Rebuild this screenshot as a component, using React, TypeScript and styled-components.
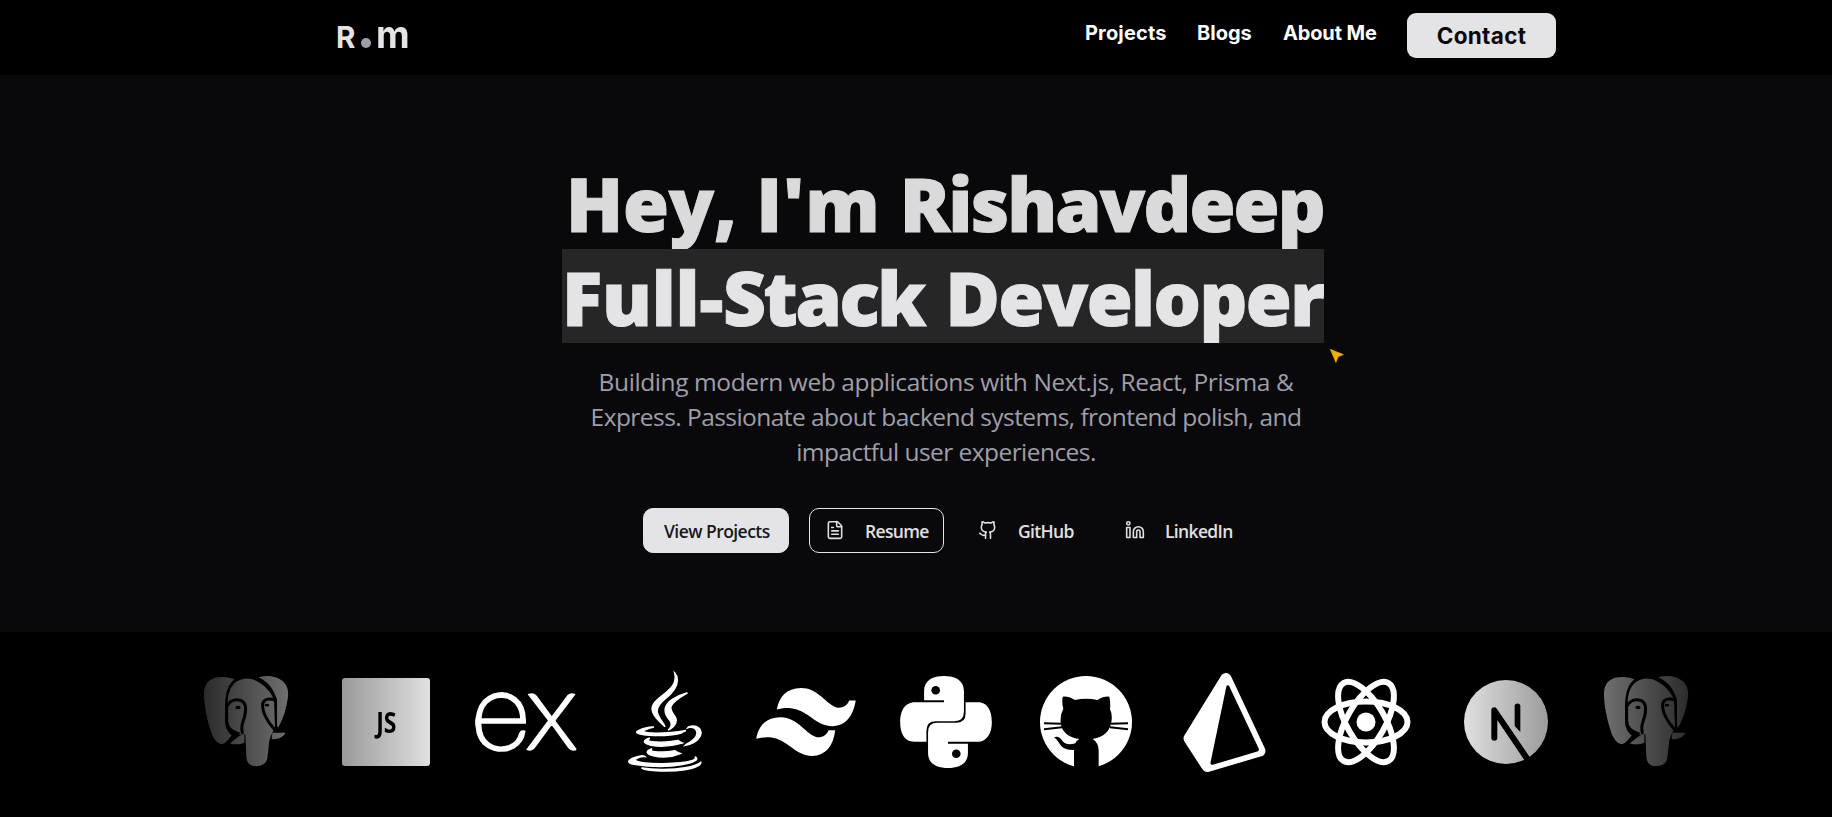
import React from 'react';
import styled, { createGlobalStyle } from 'styled-components';
import { FileText, Github, Linkedin } from 'lucide-react';
import { FaJava } from 'react-icons/fa';
import { SiExpress, SiPrisma } from 'react-icons/si';

const GlobalStyle = createGlobalStyle`
  *, *::before, *::after { box-sizing: border-box; }
  body { margin: 0; background: #000; overflow: hidden; }
`;

const Page = styled.div`
  position: relative;
  width: 1832px;
  height: 817px;
  overflow: hidden;
  background: #000;
  font-family: 'Open Sans', 'Noto Sans', sans-serif;
`;

const Header = styled.header`
  height: 75px;
  padding-left: 338px;
  background: #000;
  font-family: Inter, sans-serif;
`;

const HeaderInner = styled.div`
  width: 1218px;
  height: 75px;
  display: flex;
  justify-content: space-between;
  align-items: flex-start;
`;

const Logo = styled.a`
  display: flex;
  align-items: baseline;
  height: 75px;
  padding-top: 10px;
  color: #e4e4e7;
  font-weight: 700;
  line-height: 48px;
`;

const LogoR = styled.span`
  width: 23px;
  margin-left: -2px;
  font-size: 29.5px;
`;

const LogoDot = styled.span`
  width: 10px;
  height: 10px;
  margin: 0 5px 0 2px;
  border-radius: 50%;
  background: #9f9fa9;
`;

const LogoM = styled.span`
  font-size: 38px;
  transform: scaleX(0.97);
  transform-origin: left;
`;

const Nav = styled.nav`
  display: flex;
  align-items: flex-start;
  padding-top: 13px;
`;

const NavLink = styled.a<{ $width: number; $spacing?: number }>`
  width: ${(p) => p.$width}px;
  color: #fff;
  font-size: 20px;
  font-weight: 700;
  line-height: 40px;
  letter-spacing: ${(p) => p.$spacing ?? 0}px;
  white-space: nowrap;
`;

const ContactButton = styled.button`
  width: 149px;
  height: 45px;
  padding: 0;
  border: 0;
  border-radius: 9px;
  background: #e4e4e7;
  color: #09090b;
  font-family: inherit;
  font-size: 22.5px;
  font-weight: 650;
  letter-spacing: 0.3px;
  line-height: 45px;
`;

const Hero = styled.main`
  display: flex;
  flex-direction: column;
  align-items: center;
  height: 557px;
  padding: 80px 0 0 61px;
  background: #09090b;
`;

const Title = styled.h1`
  display: flex;
  flex-direction: column;
  width: 769px;
  margin: 0 0 21px;
  padding-right: 7px;
  font-size: 74.5px;
  font-weight: 800;
  line-height: 94px;
`;

const TitleLine = styled.span<{ $indent: number; $highlight?: boolean }>`
  height: 94px;
  padding: 1px 0 0 ${(p) => p.$indent}px;
  overflow: hidden;
  white-space: nowrap;
  color: ${(p) => (p.$highlight ? '#e4e4e7' : '#dadada')};
  background: ${(p) => (p.$highlight ? '#262626' : 'transparent')};
  -webkit-text-stroke: 1px currentColor;
`;

const Word = styled.span<{ $spacing: number; $gap?: number }>`
  margin-right: ${(p) => p.$gap ?? 0}px;
  letter-spacing: ${(p) => p.$spacing}px;
`;

const Intro = styled.p`
  display: flex;
  flex-direction: column;
  align-items: center;
  margin: 0 0 39px;
  color: #9f9fa9;
  font-size: 24.5px;
  line-height: 35px;
`;

const IntroLine = styled.span<{ $spacing: number }>`
  margin-left: -1px;
  letter-spacing: ${(p) => p.$spacing}px;
  white-space: nowrap;
`;

const Actions = styled.div`
  display: flex;
  width: 607px;
`;

const ActionButton = styled.a<{ $width: number; $gap?: number; $variant?: 'solid' | 'outline' }>`
  flex: none;
  display: flex;
  align-items: center;
  width: ${(p) => p.$width}px;
  height: 45px;
  margin-right: ${(p) => p.$gap ?? 0}px;
  padding-left: ${(p) => (p.$variant === 'solid' ? 20 : 16)}px;
  border: 1px solid ${(p) => (p.$variant ? '#e4e4e7' : 'transparent')};
  border-radius: 10px;
  background: ${(p) => (p.$variant === 'solid' ? '#e4e4e7' : 'transparent')};
  color: ${(p) => (p.$variant === 'solid' ? '#18181b' : '#e0e0e3')};
  font-size: 17.5px;
  font-weight: ${(p) => (p.$variant === 'solid' ? 550 : 600)};
  letter-spacing: ${(p) => (p.$variant === 'solid' ? -0.55 : -0.65)}px;
  line-height: 24px;
  white-space: nowrap;

  svg {
    flex: none;
    margin: -2px 20px 0 -1px;
  }
`;

const ActionLabel = styled.span`
  padding-top: 1px;
`;

const Pointer = styled.svg`
  position: absolute;
  left: 1330px;
  top: 349px;
  width: 14px;
  height: 14px;
`;

const TechStrip = styled.section`
  display: flex;
  gap: 40px;
  width: 1593px;
  height: 180px;
  margin-left: 150px;
  padding: 40px 0 0 46px;
  overflow: hidden;
  mask-image: linear-gradient(to right, transparent, #000 20%, #000 80%, transparent);
`;

const TechSlot = styled.div<{ $shift?: number }>`
  flex: none;
  display: flex;
  align-items: center;
  justify-content: center;
  width: 100px;
  height: 100px;
  color: #fff;
  filter: blur(0.5px);

  svg {
    flex: none;
    overflow: visible;
    margin-left: ${(p) => p.$shift ?? 0}px;
  }
`;

const JsTile = styled.div`
  display: flex;
  align-items: center;
  justify-content: center;
  width: 88px;
  height: 88px;
  border-radius: 3px;
  background: #fff;
  color: #000;
  font-size: 28px;
  font-weight: 700;
  line-height: 28px;
`;

const JsLabel = styled.span`
  margin-top: -1px;
  transform: scaleX(0.82);
`;

const PostgresIcon = () => (
  <svg width="100" height="116" viewBox="3 0 300 345" fill="#fff">
    <path d="M118 44C98 36 78 36 60 40C34 48 26 68 27 95C29 135 38 170 49 205C58 228 68 238 80 239C92 238 102 222 110 213C94 200 90 185 90 165V120C92 85 98 60 118 44Z" />
    <path d="M190 38C225 30 250 38 265 52C283 70 281 92 276 115C270 148 260 172 248 192C244 180 247 130 246 105C235 72 220 52 190 38Z" />
    <path
      d="M98 118C98 88 106 64 125 51C145 39 165 39 183 49C212 64 228 84 237 106L240 190C228 210 222 225 221 245L217 282C213 298 200 305 183 305C164 305 155 294 154 276L151 209C128 214 99 205 98 170Z"
      stroke="#000"
      strokeWidth="9"
      paintOrder="stroke"
    />
    <path d="M104 236C120 226 130 212 148 209L148 234C136 241 118 241 104 236Z" />
    <path d="M232 205H272C264 218 250 226 230 224Z" />
    <g fill="none" stroke="#000" strokeWidth="9" strokeLinecap="round">
      <path d="M96 124C106 108 122 104 135 107C152 112 154 130 150 150C146 172 136 180 142 204" />
      <path d="M240 107C222 100 206 104 203 118C201 142 217 172 237 193L244 190" />
      <path d="M95 120V170C96 188 106 200 128 207L108 226" />
    </g>
    <ellipse cx="129" cy="129" rx="8" ry="5" fill="#000" />
    <ellipse cx="216" cy="122" rx="7" ry="4" fill="#000" />
  </svg>
);

const TailwindIcon = () => (
  <svg width="100" height="68" viewBox="0 0 300 205" fill="#fff">
    <path d="M62 65C70 25 90 2 135 0C185 0 205 43 240 58C258 64 276 52 280 38H300C292 85 270 115 230 115C180 113 165 78 120 64C95 58 80 60 62 65Z" />
    <path d="M0 153C8 110 32 88 75 88C125 90 145 133 178 147C196 153 213 141 218 127H238C232 175 210 203 168 205C120 202 100 165 60 152C38 146 20 148 0 153Z" />
  </svg>
);

const snake =
  'M72 45C72 12 100 0 132 0S192 12 192 45V108Q192 136 164 136H108Q79 136 79 164V198H42C10 198 0 168 0 138S12 79 45 79H132V73H72Z';

const PythonIcon = () => (
  <svg width="92" height="92" viewBox="0 0 276 277" fill="#fff">
    <path d={snake} />
    <path d={snake} transform="rotate(180 138 138.500)" />
    <circle cx="107" cy="43" r="13" fill="#000" />
    <circle cx="169" cy="234" r="13" fill="#000" />
  </svg>
);

const GithubIcon = () => (
  <svg width="92" height="92" viewBox="0 0 276 276">
    <circle cx="138" cy="138" r="138" fill="#fff" />
    <path d="M68 62Q85 60 105 72Q138 64 172 72Q192 60 208 62Q212 80 210 100Q218 115 214 138Q208 180 158 189Q176 200 176 225V277H102V222Q68 224 58 202Q50 188 42 184Q58 178 68 196Q80 210 106 202Q108 194 118 189Q66 180 62 140Q60 115 70 98Q65 80 68 62Z" />
    <path d="M12 142L64 143M12 160L66 154M264 142L212 143M264 160L210 154" stroke="#000" strokeWidth="6" />
  </svg>
);

const ReactIcon = () => (
  <svg width="90" height="90" viewBox="-45 -45 90 90" fill="none" stroke="#fff" strokeWidth="6">
    <ellipse rx="41.500" ry="20.500" />
    <ellipse rx="45" ry="19" transform="rotate(60)" />
    <ellipse rx="45" ry="19" transform="rotate(-60)" />
    <circle r="9.500" fill="#fff" stroke="none" />
  </svg>
);

const NextIcon = () => (
  <svg width="84" height="84" viewBox="0 0 252 252">
    <circle cx="126" cy="126" r="126" fill="#fff" />
    <path d="M91 173V91L188 234" fill="none" stroke="#000" strokeWidth="18" strokeLinecap="round" strokeLinejoin="round" />
    <path d="M152 79a8.500 8.500 0 0 1 17 0V156L152 138Z" />
  </svg>
);

const JsIcon = () => (
  <JsTile>
    <JsLabel>JS</JsLabel>
  </JsTile>
);

const techIcons: { name: string; icon: React.ReactNode; shift?: number }[] = [
  { name: 'postgres', icon: <PostgresIcon /> },
  { name: 'javascript', icon: <JsIcon /> },
  { name: 'express', icon: <SiExpress size={100} stroke="#fff" strokeWidth={0.4} /> },
  { name: 'java', icon: <FaJava size={98} stroke="#fff" strokeWidth={8} />, shift: -3 },
  { name: 'tailwind', icon: <TailwindIcon /> },
  { name: 'python', icon: <PythonIcon /> },
  { name: 'github', icon: <GithubIcon /> },
  { name: 'prisma', icon: <SiPrisma size={99} />, shift: -4 },
  { name: 'react', icon: <ReactIcon /> },
  { name: 'next', icon: <NextIcon /> },
  { name: 'postgres-repeat', icon: <PostgresIcon /> },
];

export default function App() {
  return (
    <Page>
      <GlobalStyle />
      <Header>
        <HeaderInner>
          <Logo>
            <LogoR>R</LogoR>
            <LogoDot />
            <LogoM>m</LogoM>
          </Logo>
          <Nav>
            <NavLink $width={112} $spacing={0.15}>Projects</NavLink>
            <NavLink $width={86}>Blogs</NavLink>
            <NavLink $width={124} $spacing={-0.15}>About Me</NavLink>
            <ContactButton>Contact</ContactButton>
          </Nav>
        </HeaderInner>
      </Header>
      <Hero>
        <Title>
          <TitleLine $indent={4}>
            <Word $spacing={-0.2}>Hey,</Word> <Word $spacing={0.7}>I'm</Word>{' '}
            <Word $spacing={-1.9}>Rishavdeep</Word>
          </TitleLine>
          <TitleLine $indent={0} $highlight>
            <Word $spacing={-0.2}>Full-</Word>
            <Word $spacing={-2.4} $gap={2}>Stack</Word> <Word $spacing={-1.6}>Developer</Word>
          </TitleLine>
        </Title>
        <Intro>
          <IntroLine $spacing={-0.4}>Building modern web applications with Next.js, React, Prisma &amp;</IntroLine>
          <IntroLine $spacing={-0.55}>Express. Passionate about backend systems, frontend polish, and</IntroLine>
          <IntroLine $spacing={-0.55}>impactful user experiences.</IntroLine>
        </Intro>
        <Actions>
          <ActionButton $width={146} $gap={20} $variant="solid">
            <ActionLabel>View Projects</ActionLabel>
          </ActionButton>
          <ActionButton $width={135} $gap={18} $variant="outline">
            <FileText size={20} strokeWidth={1.9} />
            <ActionLabel>Resume</ActionLabel>
          </ActionButton>
          <ActionButton $width={147}>
            <Github size={20} strokeWidth={1.9} />
            <ActionLabel>GitHub</ActionLabel>
          </ActionButton>
          <ActionButton $width={147}>
            <Linkedin size={20} strokeWidth={1.9} />
            <ActionLabel>LinkedIn</ActionLabel>
          </ActionButton>
        </Actions>
      </Hero>
      <TechStrip>
        {techIcons.map((tech) => (
          <TechSlot key={tech.name} $shift={tech.shift}>{tech.icon}</TechSlot>
        ))}
        <TechSlot>
          <JsTile />
        </TechSlot>
      </TechStrip>
      <Pointer viewBox="0 0 45 45">
        <path d="M1 1L43 18L26 25L19 43Z" fill="#f0b100" stroke="#f0b100" strokeWidth="2" strokeLinejoin="round" />
      </Pointer>
    </Page>
  );
}
